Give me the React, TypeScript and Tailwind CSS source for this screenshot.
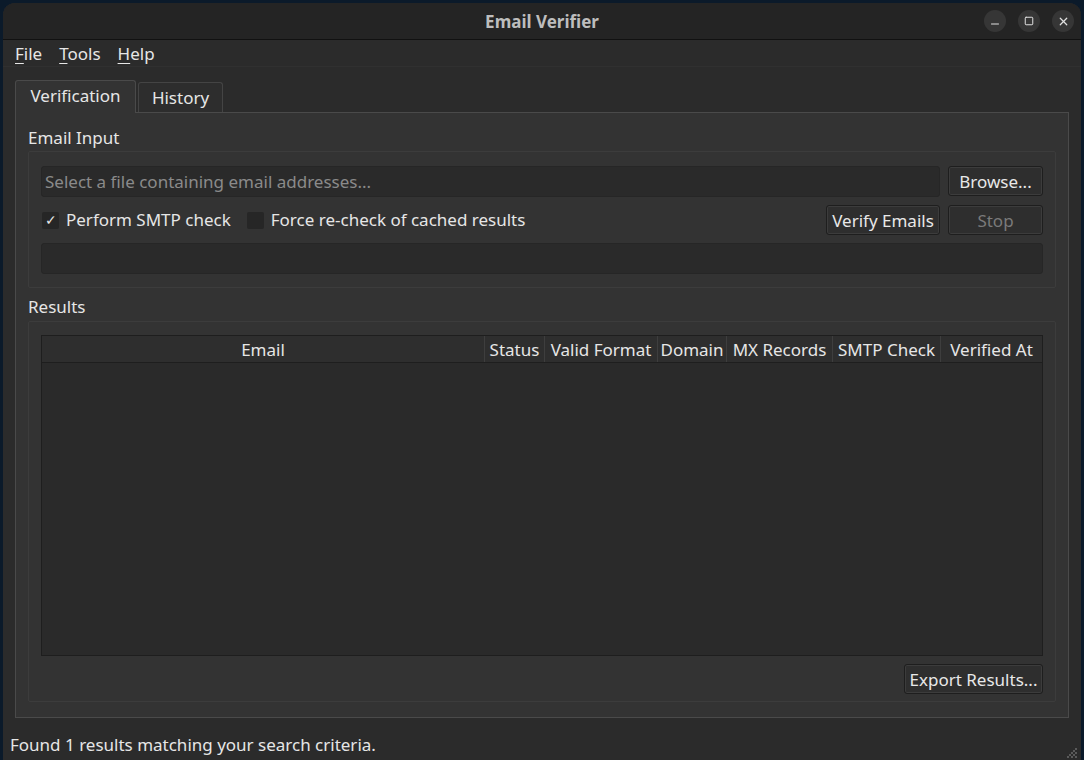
import { Minus, Square, X } from 'lucide-react';

const font = { fontFamily: '"Noto Sans", "Open Sans", sans-serif' };

function Btn({ children, disabled, className = '' }: { children: React.ReactNode; disabled?: boolean; className?: string }) {
  return (
    <button
      className={`h-[30px] rounded-[3px] border border-[#1e1e1e] bg-[#2e2e2e] text-[17px] leading-none shadow-[inset_0_0_0_1px_#3c3c3c] ${disabled ? 'text-[#7a7a7a]' : 'text-[#e8e8e8]'} ${className}`}
    >
      {children}
    </button>
  );
}

function Check({ checked, label }: { checked?: boolean; label: string }) {
  return (
    <label className="flex items-center gap-[7px]">
      <span className="flex h-[17px] w-[17px] items-center justify-center rounded-[2px] bg-[#262626] text-[14px] leading-none text-[#e8e8e8]">
        {checked ? '✓' : ''}
      </span>
      <span>{label}</span>
    </label>
  );
}

const cols = [
  { name: 'Email', w: 'flex-1' },
  { name: 'Status', w: 'w-[60px]' },
  { name: 'Valid Format', w: 'w-[113px]' },
  { name: 'Domain', w: 'w-[69px]' },
  { name: 'MX Records', w: 'w-[106px]' },
  { name: 'SMTP Check', w: 'w-[108px]' },
  { name: 'Verified At', w: 'w-[101px]' },
];

export default function App() {
  return (
    <div className="h-[760px] w-[1084px] overflow-hidden bg-[#0b1a2a] px-[3px] pt-[3px] text-[17px] text-[#e6e6e6]" style={font}>
      <div className="flex h-[757px] flex-col overflow-hidden rounded-t-[12px] bg-[#2b2b2b]">
        {/* Title bar */}
        <div className="relative flex h-[37px] shrink-0 items-center justify-center border-b border-[#111] bg-[#242424] pt-[2px]">
          <span className="text-[17px] font-bold text-[#bdbdbd]">Email Verifier</span>
          <div className="absolute right-[7px] top-[7px] flex gap-[12px]">
            <span className="flex h-[22px] w-[22px] items-center justify-center rounded-full bg-[#363636]">
              <Minus size={12} strokeWidth={2} className="mt-[5px] text-[#e0e0e0]" />
            </span>
            <span className="flex h-[22px] w-[22px] items-center justify-center rounded-full bg-[#363636]">
              <Square size={10} strokeWidth={2.4} className="text-[#e0e0e0]" />
            </span>
            <span className="flex h-[22px] w-[22px] items-center justify-center rounded-full bg-[#363636]">
              <X size={13} strokeWidth={2.2} className="text-[#e0e0e0]" />
            </span>
          </div>
        </div>

        {/* Menu bar */}
        <div className="flex h-[27px] shrink-0 items-center gap-[17px] border-b border-[#303030] bg-[#2b2b2b] px-[12px] pt-[2px] text-[17px]">
          <span><span className="underline underline-offset-[3px]">F</span>ile</span>
          <span><span className="underline underline-offset-[3px]">T</span>ools</span>
          <span><span className="underline underline-offset-[3px]">H</span>elp</span>
        </div>

        {/* Tabs */}
        <div className="flex flex-1 flex-col px-[12px] pt-[13px]">
          <div className="flex items-end gap-[2px]">
            <div className="relative z-10 -mb-px flex h-[33px] w-[121px] items-center justify-center rounded-t-[3px] border border-b-0 border-[#4a4a4a] bg-[#333333] pb-[2px]">
              Verification
            </div>
            <div className="flex h-[30px] w-[85px] items-center justify-center rounded-t-[3px] border border-b-0 border-[#444] bg-[#2d2d2d] pt-[1px]">
              History
            </div>
          </div>

          {/* Pane */}
          <div className="flex h-[606px] w-[1054px] flex-col border border-[#4a4a4a] bg-[#333333] px-[12px] pt-[13px]">
            <div className="mb-[1px] h-[24px] leading-[24px]">Email Input</div>
            <div className="flex h-[137px] flex-col gap-[8px] rounded-[2px] border border-[#3c3c3c] px-[12px] pt-[14px]">
              <div className="flex gap-[8px]">
                <div className="flex h-[31px] flex-1 items-center rounded-[3px] border border-[#262626] bg-[#2a2a2a] px-[3px] text-[#8a8a8a]">
                  Select a file containing email addresses...
                </div>
                <Btn className="w-[95px]">Browse...</Btn>
              </div>
              <div className="flex h-[30px] items-center">
                <div className="flex flex-1 items-center gap-[16px] pl-[1px]">
                  <Check checked label="Perform SMTP check" />
                  <Check label="Force re-check of cached results" />
                </div>
                <Btn className="w-[114px]">Verify Emails</Btn>
                <Btn disabled className="ml-[8px] w-[95px]">Stop</Btn>
              </div>
              <div className="h-[31px] rounded-[3px] border border-[#262626] bg-[#2a2a2a]" />
            </div>

            <div className="mb-[2px] mt-[7px] h-[24px] leading-[24px]">Results</div>
            <div className="flex h-[381px] flex-col rounded-[2px] border border-[#3c3c3c] px-[12px] pt-[13px]">
              <div className="flex h-[321px] flex-col border border-[#1e1e1e] bg-[#2a2a2a]">
                <div className="flex h-[27px] shrink-0 border-b border-[#1e1e1e] bg-[#2e2e2e]">
                  {cols.map((c) => (
                    <div
                      key={c.name}
                      className={`${c.w} flex items-center justify-center whitespace-nowrap border-r border-[#3e3e3e] text-[17px] leading-none last:border-r-0`}
                    >
                      {c.name}
                    </div>
                  ))}
                </div>
              </div>
              <div className="mt-[8px] flex justify-end">
                <Btn className="w-[139px]">Export Results...</Btn>
              </div>
            </div>
          </div>

          {/* Status bar */}
          <div className="relative -mx-[5px] flex flex-1 items-end pb-[3px]">
            <span className="leading-[24px]">Found 1 results matching your search criteria.</span>
            <svg className="absolute bottom-[2px] right-[-3px]" width="12" height="12" viewBox="0 0 12 12">
              {[[10, 2], [10, 6], [10, 10], [6, 6], [6, 10], [2, 10], [8, 4], [8, 8], [4, 8]].map(([x, y]) => (
                <rect key={`${x}-${y}`} x={x} y={y} width="2" height="2" fill="#5a5a5a" />
              ))}
            </svg>
          </div>
        </div>
      </div>
    </div>
  );
}
